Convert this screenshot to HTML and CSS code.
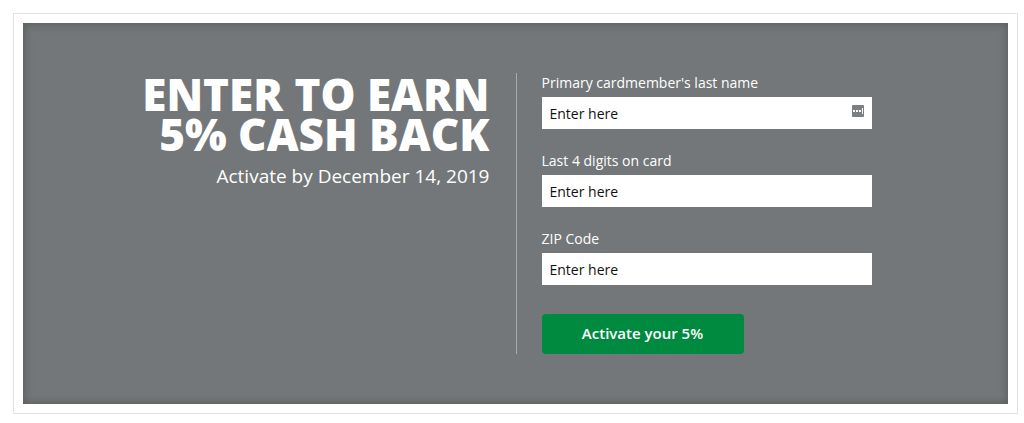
FILE: index.html
```html
<!DOCTYPE html>
<html lang="en">
<head>
    <meta charset="UTF-8">
    <meta name="viewport" content="width=device-width, initial-scale=1.0">
    <title>Activate 5% Cash Back</title>
    <link rel="stylesheet" href="styles.css">
</head>
<body>
    <main class="frame">
        <section class="panel">
            <div class="offer">
                <h1>Enter to earn<br>5% cash back</h1>
                <p>Activate by December 14, 2019</p>
            </div>
            <form class="activate-form">
                <div class="field">
                    <label for="lastName">Primary cardmember's last name</label>
                    <div class="input-wrap">
                        <input type="text" id="lastName" placeholder="Enter here">
                        <svg class="autofill-icon" viewBox="0 0 12 12" aria-hidden="true">
                            <rect width="12" height="12" rx="1" fill="#7b7f82"/>
                            <rect x="1" y="5" width="2" height="2" fill="#fff"/>
                            <rect x="4" y="5" width="2" height="2" fill="#fff"/>
                            <rect x="7" y="5" width="2" height="2" fill="#fff"/>
                            <rect x="10" y="3" width="1" height="6" fill="#fff"/>
                        </svg>
                    </div>
                </div>
                <div class="field">
                    <label for="cardDigits">Last 4 digits on card</label>
                    <input type="text" id="cardDigits" placeholder="Enter here">
                </div>
                <div class="field">
                    <label for="zipCode">ZIP Code</label>
                    <input type="text" id="zipCode" placeholder="Enter here">
                </div>
                <button type="button">Activate your 5%</button>
            </form>
        </section>
    </main>
</body>
</html>
```

FILE: styles.css
```css
* {
    box-sizing: border-box;
}
body {
    margin: 0;
    padding: 13px 6px 9px 13px;
    background-color: #fff;
    font-family: "Open Sans", "Noto Sans", sans-serif;
    color: #fff;
}
.frame {
    padding: 9px;
    border: 1px solid #e2e2e2;
}
.panel {
    display: grid;
    grid-template-columns: 1fr 1fr;
    padding: 50px 0;
    background-color: #737779;
    box-shadow: inset 0 0 8px 1px rgba(80, 82, 80, 0.7);
}
.offer {
    padding-right: 26px;
    text-align: right;
}
h1 {
    margin: 1px 0 0;
    font-size: 44px;
    font-weight: 800;
    line-height: 40px;
    text-transform: uppercase;
}
.offer p {
    margin: 9px 0 0;
    font-size: 19px;
    line-height: 26px;
}
.activate-form {
    padding-left: 25px;
    border-left: 1px solid #a9acad;
}
.field {
    max-width: 330px;
    margin-bottom: 22px;
}
label {
    display: block;
    padding-bottom: 4px;
    font-size: 14px;
    line-height: 20px;
}
.input-wrap {
    position: relative;
}
input {
    display: block;
    width: 100%;
    height: 32px;
    padding: 0 8px;
    border: 0;
    background-color: #fff;
    font-family: inherit;
    font-size: 14px;
}
input::placeholder {
    color: #111;
    opacity: 1;
}
/* Password manager badge inside the name field */
.autofill-icon {
    position: absolute;
    top: 8px;
    right: 8px;
    width: 12px;
    height: 12px;
}
button {
    display: block;
    width: 202px;
    height: 40px;
    margin-top: 29px;
    padding: 0 0 2px;
    border: 0;
    border-radius: 4px;
    background-color: #008a40;
    color: #fff;
    font-family: inherit;
    font-size: 15px;
    font-weight: 600;
}
```
